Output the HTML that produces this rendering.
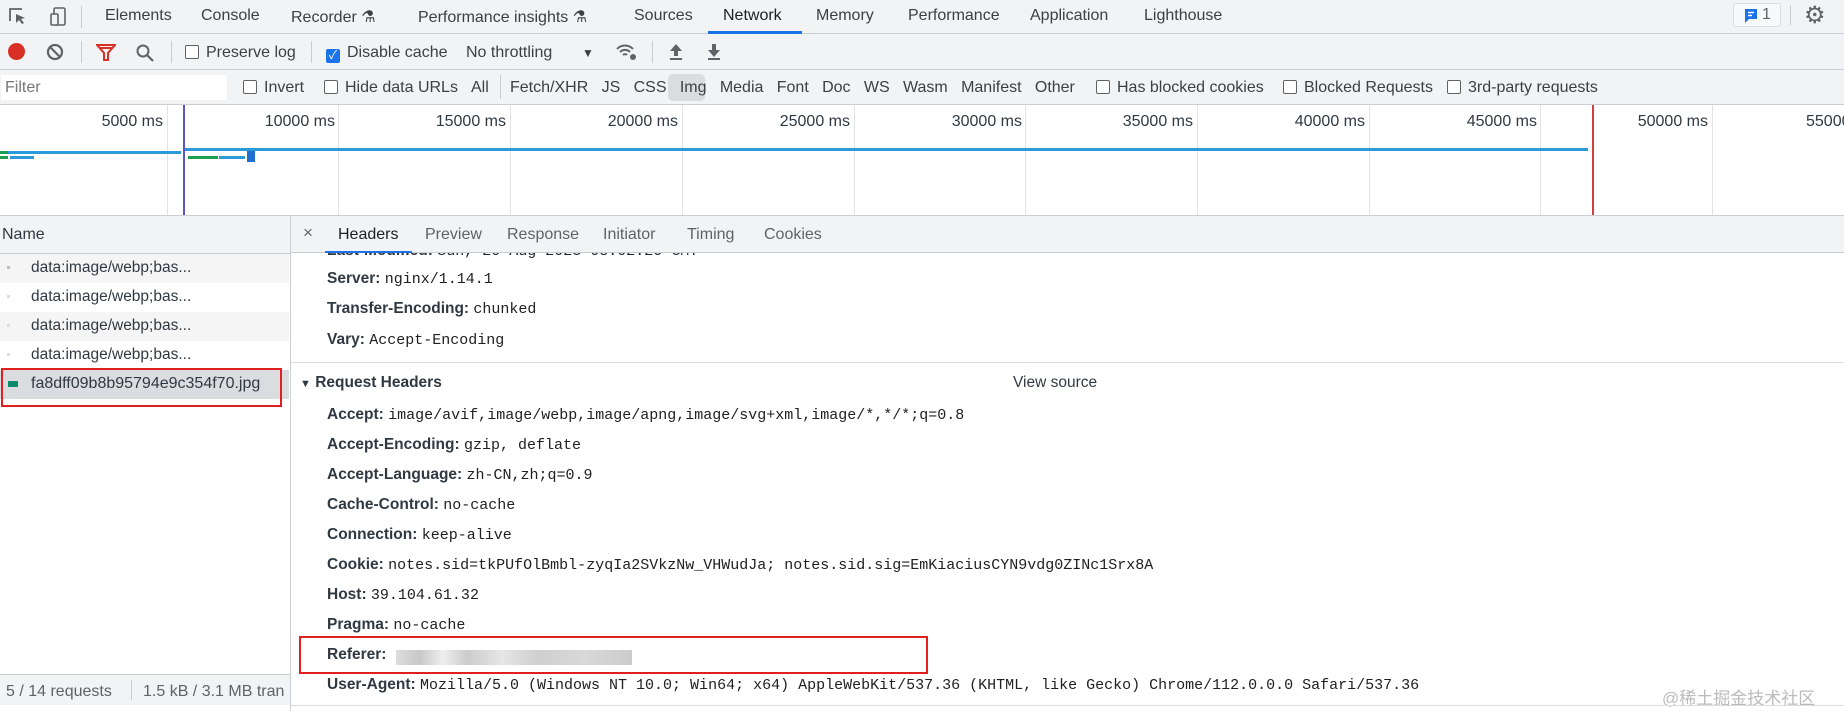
<!DOCTYPE html>
<html><head><meta charset="utf-8"><style>
*{margin:0;padding:0;box-sizing:border-box}
body{width:1844px;height:711px;overflow:hidden;background:#fff;font-family:"Liberation Sans","Noto Sans CJK SC",sans-serif;font-size:16px;color:#303942;position:relative}
.a{position:absolute;white-space:nowrap}
.bar{background:#f1f3f4;border-bottom:1px solid #cacdd1}
.cb{display:inline-block;width:14px;height:14px;border:1.5px solid #5f6368;border-radius:2px;vertical-align:-2px;margin-right:7px;background:#fff}
.mono{font-family:"Liberation Mono",monospace;font-size:15px;color:#202124}
.lbl{font-weight:bold;color:#303942;font-size:15.5px}
.hl{position:absolute;left:327px;white-space:nowrap;font-size:15.5px}
.grid{position:absolute;top:105px;width:1px;height:110px;background:#e3e3e3}
.tk{position:absolute;top:113px;font-size:16px;color:#303942;text-align:right;width:120px}
.row{position:absolute;left:0;width:289px;height:29px;font-size:15.5px;color:#303942}
.row span{position:absolute;left:31px;top:5px}
</style></head><body>
<!-- tab bar -->
<div class="a bar" style="left:0;top:0;width:1844px;height:34px"></div>
<svg class="a" style="left:8px;top:6px" width="60" height="22" viewBox="0 0 60 22"><path d="M2 15V3h12" fill="none" stroke="#5f6368" stroke-width="1.8"/><path d="M8 8l9 4-4 1 3 4-2 1-3-4-3 3z" fill="#5f6368"/><rect x="46" y="2" width="11" height="17" rx="1.5" fill="none" stroke="#5f6368" stroke-width="1.6"/><rect x="43" y="8" width="7" height="11" rx="1" fill="#f1f3f4" stroke="#5f6368" stroke-width="1.6"/></svg>
<div class="a" style="left:81px;top:6px;width:1px;height:22px;background:#ccc"></div>
<div class="a" style="left:105px;top:7px;font-size:16px;color:#3c4043">Elements</div>
<div class="a" style="left:201px;top:7px;font-size:16px;color:#3c4043">Console</div>
<div class="a" style="left:291px;top:7px;font-size:16px;color:#3c4043">Recorder ⚗</div>
<div class="a" style="left:418px;top:7px;font-size:16px;color:#3c4043">Performance insights ⚗</div>
<div class="a" style="left:634px;top:7px;font-size:16px;color:#3c4043">Sources</div>
<div class="a" style="left:723px;top:7px;font-size:16px;color:#202124">Network</div>
<div class="a" style="left:708px;top:31px;width:94px;height:3px;background:#1a73e8"></div>
<div class="a" style="left:816px;top:7px;font-size:16px;color:#3c4043">Memory</div>
<div class="a" style="left:908px;top:7px;font-size:16px;color:#3c4043">Performance</div>
<div class="a" style="left:1030px;top:7px;font-size:16px;color:#3c4043">Application</div>
<div class="a" style="left:1144px;top:7px;font-size:16px;color:#3c4043">Lighthouse</div>
<div class="a" style="left:1733px;top:3px;width:48px;height:24px;border:1px solid #dadce0;border-radius:3px;background:#f8f9fa"></div>
<svg class="a" style="left:1744px;top:8px" width="14" height="16"><path d="M1 1h12v10H5l-4 4z" fill="#1a73e8"/><path d="M4 4.5h6M4 7.5h4" stroke="#fff" stroke-width="1.4"/></svg>
<div class="a" style="left:1762px;top:6px;font-size:16px;color:#5f6368">1</div>
<div class="a" style="left:1790px;top:5px;width:1px;height:20px;background:#ccc"></div>
<div class="a" style="left:1804px;top:1px;font-size:24px;color:#5f6368">⚙</div>
<!-- toolbar -->
<div class="a bar" style="left:0;top:34px;width:1844px;height:36px"></div>
<div class="a" style="left:8px;top:43px;width:17px;height:17px;border-radius:50%;background:#d93025"></div>
<svg class="a" style="left:46px;top:43px" width="18" height="18"><circle cx="9" cy="9" r="7" fill="none" stroke="#5f6368" stroke-width="2.2"/><path d="M4 4l10 10" stroke="#5f6368" stroke-width="2.2"/></svg>
<div class="a" style="left:81px;top:41px;width:1px;height:22px;background:#ccc"></div>
<svg class="a" style="left:96px;top:44px" width="20" height="18"><path d="M1 1h18l-7 8v7h-4V9z" fill="none" stroke="#d93025" stroke-width="2"/><path d="M4 4h12" stroke="#d93025" stroke-width="2"/></svg>
<svg class="a" style="left:135px;top:43px" width="20" height="20"><circle cx="8" cy="8" r="5.5" fill="none" stroke="#5f6368" stroke-width="2"/><path d="M12 12l6 6" stroke="#5f6368" stroke-width="2.2"/></svg>
<div class="a" style="left:171px;top:41px;width:1px;height:22px;background:#ccc"></div>
<div class="a" style="left:185px;top:44px;font-size:16px;color:#3c4043"><span class="cb"></span>Preserve log</div>
<div class="a" style="left:311px;top:41px;width:1px;height:22px;background:#ccc"></div>
<div class="a" style="left:326px;top:44px;font-size:16px;color:#3c4043"><span class="cb" style="background:#1a73e8;border-color:#1a73e8;color:#fff;font-size:12px;line-height:11px;text-align:center">✓</span>Disable cache</div>
<div class="a" style="left:466px;top:44px;font-size:16px;color:#3c4043">No throttling</div>
<div class="a" style="left:582px;top:46px;font-size:12px;color:#3c4043">▼</div>
<svg class="a" style="left:615px;top:42px" width="24" height="20"><path d="M2 7a11 11 0 0 1 16 0M5 10a7 7 0 0 1 10 0M8 13a3 3 0 0 1 4 0" fill="none" stroke="#5f6368" stroke-width="2"/><circle cx="18" cy="15" r="3" fill="#5f6368"/></svg>
<div class="a" style="left:652px;top:41px;width:1px;height:22px;background:#ccc"></div>
<svg class="a" style="left:668px;top:43px" width="16" height="18"><path d="M8 1l6 7H10v5H6V8H2z" fill="#5f6368"/><path d="M2 16h12" stroke="#5f6368" stroke-width="2"/></svg>
<svg class="a" style="left:706px;top:43px" width="16" height="18"><path d="M8 14l6-7H10V1H6v6H2z" fill="#5f6368"/><path d="M2 16h12" stroke="#5f6368" stroke-width="2"/></svg>
<!-- filter row -->
<div class="a bar" style="left:0;top:70px;width:1844px;height:35px"></div>
<div class="a" style="left:1px;top:75px;width:226px;height:25px;background:#fff"></div>
<div class="a" style="left:5px;top:79px;font-size:16px;color:#777">Filter</div>
<div class="a" style="left:243px;top:79px;font-size:16px;color:#3c4043"><span class="cb"></span>Invert</div>
<div class="a" style="left:324px;top:79px;font-size:16px;color:#3c4043"><span class="cb"></span>Hide data URLs</div>
<div class="a" style="left:471px;top:79px;font-size:16px;color:#3c4043">All</div>
<div class="a" style="left:500px;top:75px;width:1px;height:24px;background:#ccc"></div>
<div class="a" style="left:668px;top:74px;width:37px;height:27px;background:#dadce0;border-radius:5px"></div>
<div class="a" style="left:510px;top:79px;font-size:16px;color:#3c4043;word-spacing:0">Fetch/XHR&nbsp;&nbsp; JS&nbsp;&nbsp; CSS&nbsp;&nbsp; Img&nbsp;&nbsp; Media&nbsp;&nbsp; Font&nbsp;&nbsp; Doc&nbsp;&nbsp; WS&nbsp;&nbsp; Wasm&nbsp;&nbsp; Manifest&nbsp;&nbsp; Other</div>
<div class="a" style="left:1096px;top:79px;font-size:16px;color:#3c4043"><span class="cb"></span>Has blocked cookies</div>
<div class="a" style="left:1283px;top:79px;font-size:16px;color:#3c4043"><span class="cb"></span>Blocked Requests</div>
<div class="a" style="left:1447px;top:79px;font-size:16px;color:#3c4043"><span class="cb"></span>3rd-party requests</div>
<!-- timeline -->
<div class="grid" style="left:167px"></div><div class="grid" style="left:338px"></div><div class="grid" style="left:510px"></div><div class="grid" style="left:682px"></div><div class="grid" style="left:854px"></div><div class="grid" style="left:1025px"></div><div class="grid" style="left:1197px"></div><div class="grid" style="left:1369px"></div><div class="grid" style="left:1540px"></div><div class="grid" style="left:1712px"></div>
<div class="tk" style="left:43px">5000 ms</div><div class="tk" style="left:215px">10000 ms</div><div class="tk" style="left:386px">15000 ms</div><div class="tk" style="left:558px">20000 ms</div><div class="tk" style="left:730px">25000 ms</div><div class="tk" style="left:902px">30000 ms</div><div class="tk" style="left:1073px">35000 ms</div><div class="tk" style="left:1245px">40000 ms</div><div class="tk" style="left:1417px">45000 ms</div><div class="tk" style="left:1588px">50000 ms</div>
<div class="a" style="left:1806px;top:113px;font-size:16px;color:#303942">55000</div>
<div class="a" style="left:0;top:151px;width:181px;height:3px;background:#2a9ad8"></div>
<div class="a" style="left:0;top:151px;width:8px;height:3px;background:#1e9e50"></div>
<div class="a" style="left:0;top:156px;width:8px;height:3px;background:#1e9e50"></div>
<div class="a" style="left:10px;top:156px;width:24px;height:3px;background:#2a9ad8"></div>
<div class="a" style="left:185px;top:148px;width:1403px;height:3px;background:#2a9ad8"></div>
<div class="a" style="left:188px;top:156px;width:30px;height:3px;background:#1e9e50"></div>
<div class="a" style="left:219px;top:156px;width:26px;height:3px;background:#2a9ad8"></div>
<div class="a" style="left:247px;top:151px;width:8px;height:11px;background:#1f6fd0"></div>
<div class="a" style="left:183px;top:105px;width:2px;height:110px;background:#5b55c9"></div>
<div class="a" style="left:1592px;top:105px;width:2px;height:110px;background:#d0413a"></div>
<div class="a" style="left:0;top:215px;width:1844px;height:1px;background:#cacdd1"></div>
<!-- name panel -->
<div class="a" style="left:0;top:216px;width:290px;height:38px;background:#f1f3f4;border-bottom:1px solid #cacdd1"></div>
<div class="a" style="left:2px;top:226px;font-size:16px;color:#303942">Name</div>
<div class="row" style="top:254px;background:#f5f5f5"><span>data:image/webp;bas...</span></div>
<div class="row" style="top:283px"><span>data:image/webp;bas...</span></div>
<div class="row" style="top:312px;background:#f5f5f5"><span>data:image/webp;bas...</span></div>
<div class="row" style="top:341px"><span>data:image/webp;bas...</span></div>
<div class="row" style="top:370px;background:#dadce0"><span style="font-size:16px">fa8dff09b8b95794e9c354f70.jpg</span></div>
<div class="a" style="left:7px;top:266px;width:3px;height:3px;background:#bbb"></div>
<div class="a" style="left:7px;top:295px;width:3px;height:3px;background:#ddd"></div>
<div class="a" style="left:7px;top:324px;width:3px;height:3px;background:#ddd"></div>
<div class="a" style="left:7px;top:353px;width:3px;height:3px;background:#ddd"></div>
<div class="a" style="left:8px;top:381px;width:10px;height:6px;background:#0d8a6a"></div>
<div class="a" style="left:1px;top:368px;width:281px;height:39px;border:2.5px solid #e0201e"></div>
<div class="a" style="left:290px;top:216px;width:1px;height:495px;background:#cacdd1"></div>
<div class="a" style="left:0;top:674px;width:290px;height:31px;background:#f1f3f4;border-top:1px solid #cacdd1"></div>
<div class="a" style="left:6px;top:683px;font-size:16px;color:#5f6368">5 / 14 requests</div>
<div class="a" style="left:131px;top:680px;width:1px;height:20px;background:#ccc"></div>
<div class="a" style="left:143px;top:683px;font-size:16px;color:#5f6368">1.5 kB / 3.1 MB tran</div>
<!-- detail -->
<div class="hl" style="top:242px"><span class="lbl">Last-Modified:</span> <span class="mono">Sun, 20 Aug 2023 08:02:20 GMT</span></div>
<div class="a" style="left:291px;top:216px;width:1553px;height:37px;background:#f1f3f4;border-bottom:1px solid #cacdd1"></div>
<div class="a" style="left:303px;top:223px;font-size:17px;color:#5f6368">×</div>
<div class="a" style="left:338px;top:226px;font-size:16px;color:#202124">Headers</div>
<div class="a" style="left:325px;top:251px;width:87px;height:2px;background:#1a73e8"></div>
<div class="a" style="left:425px;top:226px;font-size:16px;color:#5f6368">Preview</div>
<div class="a" style="left:507px;top:226px;font-size:16px;color:#5f6368">Response</div>
<div class="a" style="left:603px;top:226px;font-size:16px;color:#5f6368">Initiator</div>
<div class="a" style="left:687px;top:226px;font-size:16px;color:#5f6368">Timing</div>
<div class="a" style="left:764px;top:226px;font-size:16px;color:#5f6368">Cookies</div>
<div class="hl" style="top:270px"><span class="lbl">Server:</span> <span class="mono">nginx/1.14.1</span></div>
<div class="hl" style="top:300px"><span class="lbl">Transfer-Encoding:</span> <span class="mono">chunked</span></div>
<div class="hl" style="top:331px"><span class="lbl">Vary:</span> <span class="mono">Accept-Encoding</span></div>
<div class="a" style="left:291px;top:362px;width:1553px;height:1px;background:#dadce0"></div>
<div class="a" style="left:300px;top:374px;font-size:15.5px;font-weight:bold;color:#303942"><span style="font-size:11px">▼</span> Request Headers</div>
<div class="a" style="left:1013px;top:374px;font-size:15.5px;color:#303942">View source</div>
<div class="hl" style="top:406px"><span class="lbl">Accept:</span> <span class="mono">image/avif,image/webp,image/apng,image/svg+xml,image/*,*/*;q=0.8</span></div>
<div class="hl" style="top:436px"><span class="lbl">Accept-Encoding:</span> <span class="mono">gzip, deflate</span></div>
<div class="hl" style="top:466px"><span class="lbl">Accept-Language:</span> <span class="mono">zh-CN,zh;q=0.9</span></div>
<div class="hl" style="top:496px"><span class="lbl">Cache-Control:</span> <span class="mono">no-cache</span></div>
<div class="hl" style="top:526px"><span class="lbl">Connection:</span> <span class="mono">keep-alive</span></div>
<div class="hl" style="top:556px"><span class="lbl">Cookie:</span> <span class="mono">notes.sid=tkPUfOlBmbl-zyqIa2SVkzNw_VHWudJa; notes.sid.sig=EmKiaciusCYN9vdg0ZINc1Srx8A</span></div>
<div class="hl" style="top:586px"><span class="lbl">Host:</span> <span class="mono">39.104.61.32</span></div>
<div class="hl" style="top:616px"><span class="lbl">Pragma:</span> <span class="mono">no-cache</span></div>
<div class="hl" style="top:646px"><span class="lbl">Referer:</span></div>
<div class="a" style="left:396px;top:650px;width:236px;height:15px;background:linear-gradient(90deg,#ddd,#c8c8c8 10%,#eee 20%,#ccc 30%,#e6e6e6 45%,#cfcfcf 60%,#d8d8d8 80%,#ccc)"></div>
<div class="a" style="left:299px;top:636px;width:629px;height:38px;border:2.5px solid #e0201e"></div>
<div class="hl" style="top:676px"><span class="lbl">User-Agent:</span> <span class="mono">Mozilla/5.0 (Windows NT 10.0; Win64; x64) AppleWebKit/537.36 (KHTML, like Gecko) Chrome/112.0.0.0 Safari/537.36</span></div>
<div class="a" style="left:1662px;top:684px;font-size:17px;color:#bbb">@稀土掘金技术社区</div>
<div class="a" style="left:291px;top:705px;width:1553px;height:1px;background:#dadce0"></div>
</body></html>
